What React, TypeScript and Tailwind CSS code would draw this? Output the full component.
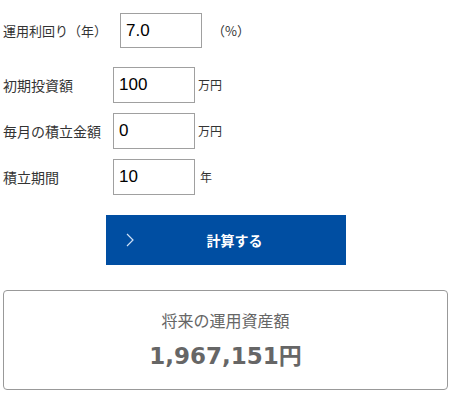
import React from "react";

const jp = { fontFamily: '"Noto Sans CJK JP", "Noto Sans", sans-serif' };

function Row({ label, value, unit, labelW, unitClass }: { label: string; value: string; unit: string; labelW: string; unitClass: string }) {
  return (
    <div className="flex items-center">
      <div className={`${labelW} text-[14px] text-[#333] leading-none`}>{label}</div>
      <div className="w-[82px] h-[36px] border border-[#a0a0a0] flex items-center pl-[5px] text-[17px] text-black" style={{ fontFamily: '"Liberation Sans", Arial, sans-serif' }}>
        {value}
      </div>
      <div className={unitClass}>{unit}</div>
    </div>
  );
}

export default function App() {
  return (
    <div className="w-[451px] h-[394px] bg-white relative overflow-hidden" style={jp}>
      <div className="pl-[3px] pt-[13px]">
        <div className="flex items-center">
          <div className="w-[117px] text-[13px] text-[#333] leading-none">運用利回り（年）</div>
          <div className="w-[82px] h-[35px] border border-[#a0a0a0] flex items-center pl-[5px] text-[17px] text-black" style={{ fontFamily: '"Liberation Sans", Arial, sans-serif' }}>
            7.0
          </div>
          <div className="ml-[10px] text-[13px] text-[#333]">（%）</div>
        </div>
        <div className="mt-[19px] flex flex-col gap-[10px]">
          <Row label="初期投資額" value="100" unit="万円" labelW="w-[110px]" unitClass="ml-[3px] text-[12px] text-[#333]" />
          <Row label="毎月の積立金額" value="0" unit="万円" labelW="w-[110px]" unitClass="ml-[3px] text-[12px] text-[#333]" />
          <Row label="積立期間" value="10" unit="年" labelW="w-[110px]" unitClass="ml-[5px] text-[12px] text-[#333]" />
        </div>
      </div>
      <div className="mt-[20px] flex justify-center">
        <div className="w-[240px] h-[50px] bg-[#004ea2] relative flex items-center justify-center pl-[18px] text-white text-[14px] font-bold">
          <svg className="absolute left-[20px] top-[18px]" width="9" height="14" viewBox="0 0 9 14">
            <path d="M1 1 L7 7 L1 13" fill="none" stroke="#cfe0f5" strokeWidth="1.2" />
          </svg>
          計算する
        </div>
      </div>
      <div className="mx-[3px] mt-[25px] h-[100px] border border-[#999] rounded-[4px] flex flex-col items-center pt-[18px]">
        <div className="text-[16px] text-[#666] leading-[22px]">将来の運用資産額</div>
        <div className="mt-[8px] text-[23px] font-bold text-[#666] leading-[30px]" style={{ fontFamily: '"DejaVu Sans", "Noto Sans CJK JP", sans-serif' }}>
          1,967,151<span style={jp}>円</span>
        </div>
      </div>
    </div>
  );
}
